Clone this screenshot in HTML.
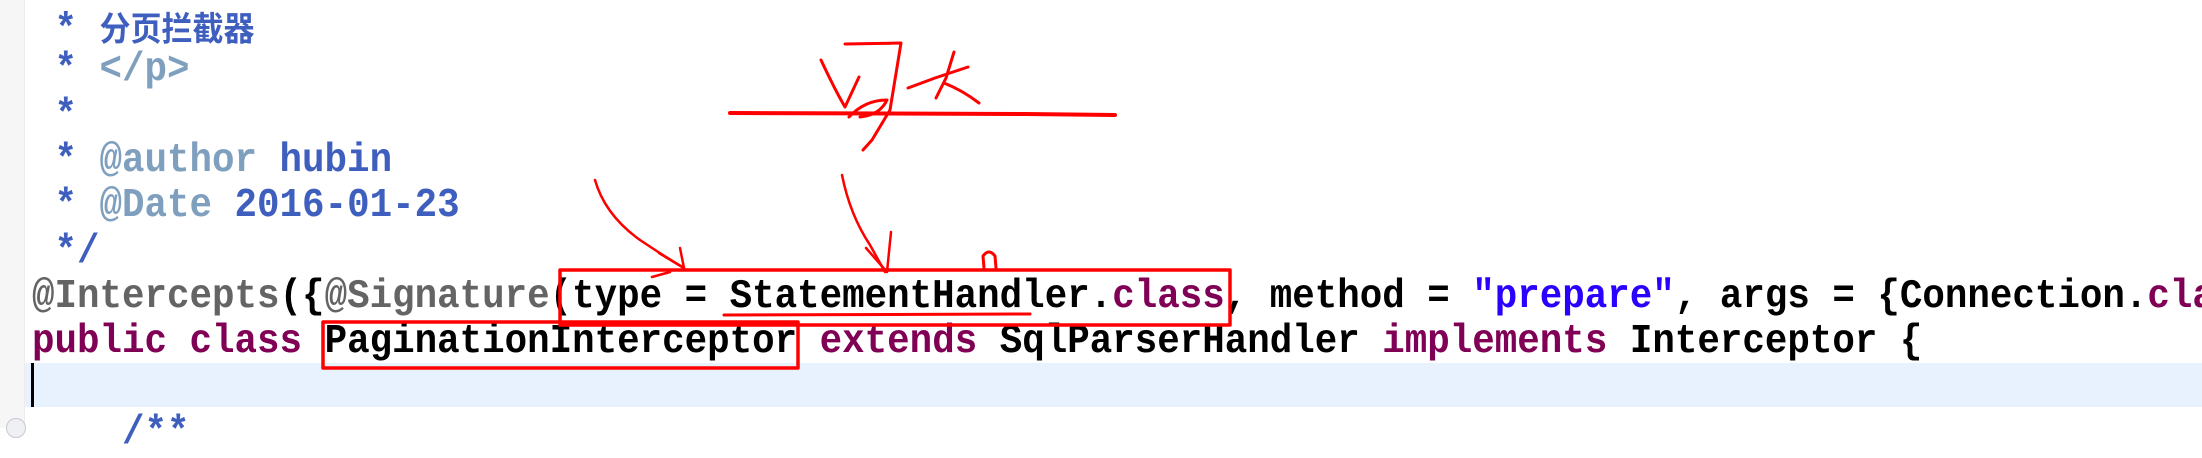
<!DOCTYPE html>
<html><head><meta charset="utf-8"><style>
html,body{margin:0;padding:0;background:#fff;}
body{width:2202px;height:428px;position:relative;overflow:hidden;}
.g{position:absolute;left:0;top:0;width:24px;height:428px;background:#f6f6f6;border-right:1px solid #ececec;}
.hl{position:absolute;left:25px;top:363px;width:2177px;height:44px;background:#e8f2fe;}
.cur{position:absolute;left:31px;top:363px;width:3px;height:44px;background:#000;}
.l{position:absolute;left:32px;width:2170px;overflow:hidden;font-family:"Liberation Mono","Noto Sans CJK SC",monospace;font-size:37.5px;line-height:45.3px;height:45.3px;white-space:pre;font-weight:bold;color:#000;transform:scaleY(1.08);transform-origin:0 70%;}
.c{color:#3f5fbf}.t{color:#7f9fbf}.k{color:#7f0055}.a{color:#646464}.s{color:#2a00ff}
.cjk{font-family:"Noto Sans CJK SC",sans-serif;font-size:31px;font-weight:bold;}
svg{position:absolute;left:0;top:0;}
</style></head><body>
<div class="g"></div>
<div class="hl"></div>
<div class="cur"></div>
<div class="l c" style="top:4px"> * <span class="cjk">分页拦截器</span></div>
<div class="l c" style="top:49px"> * <span class="t">&lt;/p&gt;</span></div>
<div class="l c" style="top:95px"> *</div>
<div class="l c" style="top:140px"> * <span class="t">@author</span> hubin</div>
<div class="l c" style="top:185px"> * <span class="t">@Date</span> 2016-01-23</div>
<div class="l c" style="top:231px"> */</div>
<div class="l" style="top:276px"><span class="a">@Intercepts</span>({<span class="a">@Signature</span>(type = StatementHandler.<span class="k">class</span>, method = <span class="s">"prepare"</span>, args = {Connection.<span class="k">class</span>})})</div>
<div class="l" style="top:321px"><span class="k">public</span> <span class="k">class</span> PaginationInterceptor <span class="k">extends</span> SqlParserHandler <span class="k">implements</span> Interceptor {</div>
<div class="l c" style="top:412px">    /**</div>
<div style="position:absolute;left:6px;top:418px;width:18px;height:18px;border-radius:50%;border:1px solid #c8c8d0;background:#eef0f4;"></div>
<svg width="2202" height="428" fill="none" stroke="#f00" stroke-linecap="round" stroke-linejoin="round">
<rect x="560" y="270" width="670" height="55" stroke-width="3.5"/>
<rect x="323" y="322" width="475" height="46" stroke-width="3.5"/>
<path d="M724 315 L1030 314" stroke-width="3"/>
<path d="M730 113 L1025 114 L1115 115" stroke-width="4"/>
<path d="M845 44 L901 43 L890 110 L872 140 L863 150" stroke-width="3"/>
<path d="M821 60 Q835 90 845 107 L859 77" stroke-width="3"/>
<path d="M849 117 Q865 100 887 100 Q880 115 860 117" stroke-width="3"/>
<path d="M908 88 L935 78 L968 67" stroke-width="3"/>
<path d="M954 52 L946 78 L936 98" stroke-width="3"/>
<path d="M944 83 Q962 90 979 103" stroke-width="3"/>
<path d="M595 180 Q605 215 640 240 Q670 260 684 268" stroke-width="2.5"/>
<path d="M680 248 L684 268 L659 253" stroke-width="2.5"/>
<path d="M652 277 L670 272" stroke-width="2.5"/>
<path d="M842 175 Q850 215 870 245 L885 272" stroke-width="2.5"/>
<path d="M891 232 L887 272 L866 248" stroke-width="2.5"/>
<path d="M984 268 L983 256 Q989 248 995 256 L996 268" stroke-width="3"/>
</svg>
</body></html>
